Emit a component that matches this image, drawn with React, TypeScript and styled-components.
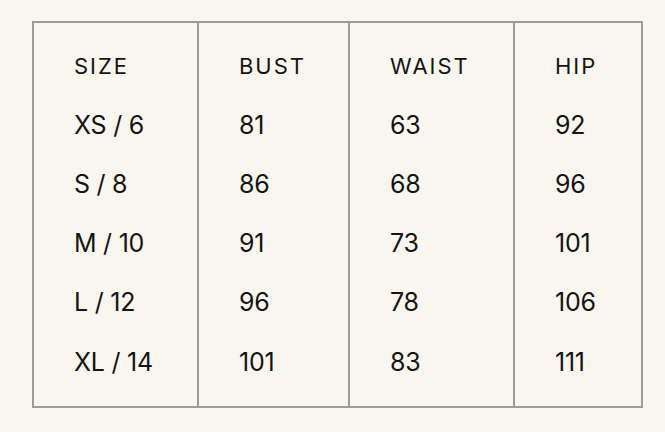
import styled, { createGlobalStyle } from 'styled-components'

const GlobalStyle = createGlobalStyle`
  body {
    margin: 0;
    background: #f9f6ef;
    font-family: Inter, "Noto Sans", sans-serif;
    color: #141414;
  }
`

const Page = styled.main`
  padding: 21px 0 0 32px;
`

const Table = styled.div`
  display: grid;
  grid-template-columns: 165px 151px 165px 126px;
  width: 611px;
  border: 2px solid #9c9c9c;
  box-sizing: border-box;
`

const Column = styled.div<{ $last?: boolean }>`
  display: flex;
  flex-direction: column;
  padding: 13px 0 15px 40px;
  border-right: ${(p) => (p.$last ? 'none' : '2px solid #9c9c9c')};
`

const Cell = styled.div<{ $head?: boolean }>`
  height: 59.2px;
  display: flex;
  align-items: center;
  font-size: ${(p) => (p.$head ? '22px' : '25px')};
  font-weight: 400;
  letter-spacing: ${(p) => (p.$head ? '0.09em' : '-0.01em')};
`

const columns = [
  { title: 'SIZE', values: ['XS / 6', 'S / 8', 'M / 10', 'L / 12', 'XL / 14'] },
  { title: 'BUST', values: ['81', '86', '91', '96', '101'] },
  { title: 'WAIST', values: ['63', '68', '73', '78', '83'] },
  { title: 'HIP', values: ['92', '96', '101', '106', '111'] },
]

export default function App() {
  return (
    <Page>
      <GlobalStyle />
      <Table>
        {columns.map((col, i) => (
          <Column key={col.title} $last={i === columns.length - 1}>
            <Cell $head>{col.title}</Cell>
            {col.values.map((v) => (
              <Cell key={v}>{v}</Cell>
            ))}
          </Column>
        ))}
      </Table>
    </Page>
  )
}
